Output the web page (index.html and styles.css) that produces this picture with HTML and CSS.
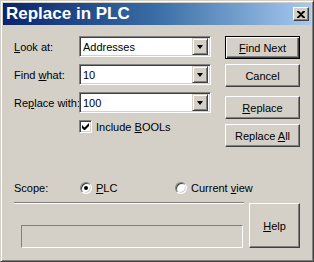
FILE: index.html
```html
<!DOCTYPE html>
<html lang="en">
<head>
    <meta charset="UTF-8">
    <title>Replace in PLC</title>
    <link rel="stylesheet" href="styles.css">
</head>
<body>
    <div class="window">
        <div class="titlebar">
            <span class="title">Replace in PLC</span>
            <div class="close">
                <svg width="8" height="7" viewBox="0 0 8 7">
                    <path d="M0 0h2l2 2 2-2h2v1L5 3.5 8 6v1H6L4 5 2 7H0V6l3-2.5L0 1z" fill="#000"/>
                </svg>
            </div>
        </div>

        <div class="body">
            <div class="top">
                <div class="form">
                    <label class="lbl"><u>L</u>ook at:</label>
                    <div class="combo">
                        <span class="value">Addresses</span>
                        <span class="drop"><i class="arrow"></i></span>
                    </div>

                    <label class="lbl">Find <u>w</u>hat:</label>
                    <div class="combo">
                        <span class="value">10</span>
                        <span class="drop"><i class="arrow"></i></span>
                    </div>

                    <label class="lbl">Re<u>p</u>lace with:</label>
                    <div class="combo">
                        <span class="value">100</span>
                        <span class="drop"><i class="arrow"></i></span>
                    </div>

                    <span></span>
                    <div class="check-row">
                        <span class="checkbox">
                            <svg width="7" height="7" viewBox="0 0 7 7">
                                <path d="M0 2v3l2 2h1l4-4V0L2.5 4.5z" fill="#000"/>
                            </svg>
                        </span>
                        <span>Include <u>B</u>OOLs</span>
                    </div>
                </div>

                <div class="buttons">
                    <div class="btn default"><span><u>F</u>ind Next</span></div>
                    <div class="btn"><span>Cancel</span></div>
                    <div class="btn spaced"><span><u>R</u>eplace</span></div>
                    <div class="btn"><span>Replace <u>A</u>ll</span></div>
                </div>
            </div>

            <div class="scope">
                <span class="scope-lbl">Scope:</span>
                <span class="radio on"></span>
                <span class="opt"><u>P</u>LC</span>
                <span class="radio"></span>
                <span class="opt">Current <u>v</u>iew</span>
            </div>

            <div class="bottom">
                <div class="left">
                    <div class="sep"></div>
                    <div class="status"></div>
                </div>
                <div class="btn help"><span><u>H</u>elp</span></div>
            </div>
        </div>
    </div>
</body>
</html>
```

FILE: styles.css
```css
body {
    margin: 0;
    background: #d4d0c8;
    font-family: "Liberation Sans", Arial, sans-serif;
    font-size: 11px;
    color: #000;
}
.window {
    width: 314px;
    height: 262px;
    box-sizing: border-box;
    background: #d4d0c8;
    border: 1px solid;
    border-color: #d4d0c8 #404040 #404040 #d4d0c8;
    box-shadow: inset 1px 1px #fff, inset -1px -1px #808080;
    padding: 2px;
}
.titlebar {
    height: 22px;
    display: flex;
    align-items: center;
    justify-content: space-between;
    padding: 0 2px 0 3px;
    background: linear-gradient(to right, #0a246a 0%, #3a6ea5 50%, #a6caf0 100%);
}
.title {
    color: #fff;
    font-weight: bold;
    font-size: 17px;
}
.close {
    width: 16px;
    height: 14px;
    box-sizing: border-box;
    display: flex;
    align-items: center;
    justify-content: center;
    background: #d4d0c8;
    border: 1px solid;
    border-color: #fff #404040 #404040 #fff;
    box-shadow: inset -1px -1px #808080;
}
.body {
    padding: 11px 11px 0 11px;
}
.top {
    display: flex;
    gap: 14px;
}
.form {
    width: 197px;
    display: grid;
    grid-template-columns: 65px 132px;
    grid-auto-rows: 21px;
    row-gap: 7px;
    align-items: center;
    align-content: start;
}
.lbl {
    white-space: nowrap;
}
.combo {
    height: 21px;
    box-sizing: border-box;
    display: flex;
    align-items: center;
    background: #fff;
    border: 1px solid;
    border-color: #808080 #fff #fff #808080;
    box-shadow: inset 1px 1px #404040, inset -1px -1px #d4d0c8;
    padding: 2px 2px 2px 3px;
}
.value {
    flex: 1;
}
.drop {
    width: 16px;
    height: 17px;
    box-sizing: border-box;
    display: flex;
    align-items: center;
    justify-content: center;
    background: #d4d0c8;
    border: 1px solid;
    border-color: #d4d0c8 #404040 #404040 #d4d0c8;
    box-shadow: inset 1px 1px #fff, inset -1px -1px #808080;
}
.arrow {
    width: 0;
    height: 0;
    border-left: 3.5px solid transparent;
    border-right: 3.5px solid transparent;
    border-top: 4px solid #000;
}
.check-row {
    display: flex;
    align-items: center;
    gap: 4px;
    align-self: start;
    height: 13px;
}
.checkbox {
    width: 13px;
    height: 13px;
    box-sizing: border-box;
    display: flex;
    align-items: center;
    justify-content: center;
    background: #fff;
    border: 1px solid;
    border-color: #808080 #fff #fff #808080;
    box-shadow: inset 1px 1px #404040, inset -1px -1px #d4d0c8;
}
.buttons {
    width: 75px;
    display: flex;
    flex-direction: column;
    gap: 5px;
}
.btn {
    height: 23px;
    box-sizing: border-box;
    display: flex;
    align-items: center;
    justify-content: center;
    background: #d4d0c8;
    border: 1px solid;
    border-color: #fff #404040 #404040 #fff;
    box-shadow: inset -1px -1px #808080;
    white-space: nowrap;
}
.btn.default {
    border-color: #000;
    box-shadow: inset 1px 1px #fff, inset -1px -1px #404040, inset -2px -2px #808080;
}
.btn.spaced {
    margin-top: 4px;
}
.scope {
    margin-top: 34px;
    height: 14px;
    display: flex;
    align-items: center;
}
.scope-lbl {
    width: 66px;
}
.radio {
    width: 12px;
    height: 12px;
    box-sizing: border-box;
    border-radius: 50%;
    background: #fff;
    border: 1px solid;
    border-color: #808080 #fff #fff #808080;
    box-shadow: inset 1px 1px #404040, inset -1px -1px #d4d0c8;
    display: flex;
    align-items: center;
    justify-content: center;
    margin-right: 4px;
}
.radio.on::after {
    content: "";
    width: 4px;
    height: 4px;
    border-radius: 50%;
    background: #000;
}
.opt {
    width: 79px;
}
.bottom {
    margin-top: 7px;
    display: flex;
    gap: 5px;
}
.left {
    width: 230px;
}
.sep {
    height: 0;
    border-top: 1px solid #808080;
    border-bottom: 1px solid #fff;
}
.status {
    margin: 21px 0 0 7px;
    width: 222px;
    height: 23px;
    box-sizing: border-box;
    border: 1px solid;
    border-color: #808080 #fff #fff #808080;
}
.btn.help {
    margin-top: 1px;
    width: 51px;
    height: 45px;
}
```
